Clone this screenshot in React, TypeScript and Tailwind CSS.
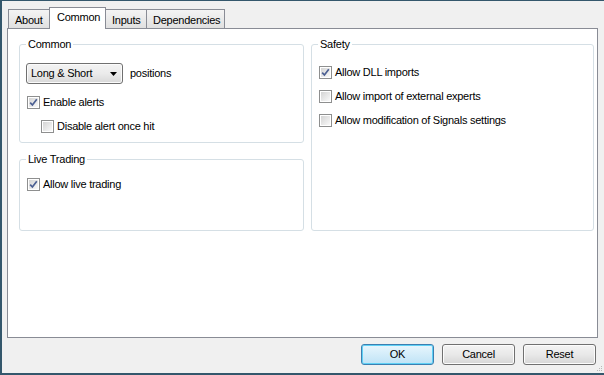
import React from "react";

function CheckBox({ checked }: { checked?: boolean }) {
  return (
    <span className="w-[13px] h-[13px] border border-[#8e8f8f] bg-white p-px flex shrink-0">
      <span className="flex-1 bg-linear-to-br from-[#d4d4d4] to-[#f9f9f9] flex items-center justify-center">
        {checked && (
          <svg width="9" height="9" viewBox="0 0 9 9">
            <path d="M1.2 4.6 L3.4 7 L7.8 1.2" stroke="#4b5f92" strokeWidth="1.7" fill="none" />
          </svg>
        )}
      </span>
    </span>
  );
}

function Row({ label, checked, indent = "" }: { label: string; checked?: boolean; indent?: string }) {
  return (
    <div className={`flex items-center h-[17px] gap-[3px] ${indent}`}>
      <CheckBox checked={checked} />
      <span className="leading-[13px]">{label}</span>
    </div>
  );
}

function Tab({ label, w, active }: { label: string; w: string; active?: boolean }) {
  if (active) {
    return (
      <div className={`${w} h-[22px] -ml-px -mb-px relative z-10 bg-white border border-b-0 border-[#898c95] pl-[7px] pt-[3px] leading-[13px]`}>
        {label}
      </div>
    );
  }
  return (
    <div className={`${w} h-[19px] -ml-px first:ml-0 bg-linear-to-b from-[#f4f4f4] to-[#e0e0e0] border border-b-0 border-[#898c95] pl-[6px] pt-[4px] leading-[13px]`}>
      {label}
    </div>
  );
}

function Group({ title, className, children }: { title: string; className: string; children: React.ReactNode }) {
  return (
    <fieldset className={`border border-[#d5dfe5] rounded-[3px] ${className}`}>
      <legend className="ml-[6px] px-[2px] leading-[13px]">{title}</legend>
      {children}
    </fieldset>
  );
}

function Button({ label, primary }: { label: string; primary?: boolean }) {
  return (
    <button
      type="button"
      className={
        primary
          ? "w-[73px] h-[21px] rounded-[3px] border border-[#3c7fb1] bg-linear-to-b from-[#e8f6fd] to-[#bfe3f6] shadow-[inset_0_0_0_1px_#5fd0f5]"
          : "w-[73px] h-[21px] rounded-[3px] border border-[#707070] bg-linear-to-b from-[#f3f3f3] via-[#e9e9e9] to-[#d6d6d6] shadow-[inset_0_0_0_1px_#fcfcfc]"
      }
    >
      {label}
    </button>
  );
}

export default function App() {
  return (
    <div className="relative w-[604px] h-[375px] bg-[#f0f0f0] border-l-2 border-t border-b-2 border-[#34576c] flex flex-col text-[11px] tracking-[-0.25px] text-black font-['Liberation_Sans',Arial,sans-serif]">
      <div className="h-[27px] flex items-end pl-[6px]">
        <Tab label="About" w="w-[42px]" />
        <Tab label="Common" w="w-[57px]" active />
        <Tab label="Inputs" w="w-[42px]" />
        <Tab label="Dependencies" w="w-[79px]" />
      </div>

      <div className="h-[310px] ml-[5px] mr-[6px] bg-white border border-[#898c95] pt-[9px] pl-[11px] flex gap-[7px]">
        <div className="w-[285px] flex flex-col">
          <Group title="Common" className="h-[105px]">
            <div className="pl-[6px] pt-[12px]">
              <div className="flex items-center gap-[7px]">
                <div className="w-[97px] h-[21px] rounded-[3px] border border-[#707070] bg-linear-to-b from-[#f3f3f3] via-[#ebebeb] to-[#d8d8d8] shadow-[inset_0_0_0_1px_#fbfbfb] flex items-center pl-[4px] pr-[5px]">
                  <span className="flex-1">Long &amp; Short</span>
                  <svg width="7" height="4" viewBox="0 0 7 4">
                    <path d="M0 0 H7 L3.5 4 Z" fill="#000" />
                  </svg>
                </div>
                <span>positions</span>
              </div>
              <div className="mt-[10px] flex flex-col gap-[7px]">
                <Row label="Enable alerts" checked indent="ml-px" />
                <Row label="Disable alert once hit" indent="ml-[15px]" />
              </div>
            </div>
          </Group>
          <Group title="Live Trading" className="mt-[10px] h-[78px]">
            <div className="pl-[7px] pt-[10px]">
              <Row label="Allow live trading" checked />
            </div>
          </Group>
        </div>
        <div className="w-[283px]">
          <Group title="Safety" className="h-[193px]">
            <div className="pl-[7px] pt-[13px] flex flex-col gap-[7px]">
              <Row label="Allow DLL imports" checked />
              <Row label="Allow import of external experts" />
              <Row label="Allow modification of Signals settings" />
            </div>
          </Group>
        </div>
      </div>

      <div className="flex-1 flex justify-end items-start pt-[6px] pr-[8px] gap-[8px]">
        <Button label="OK" primary />
        <Button label="Cancel" />
        <Button label="Reset" />
      </div>

      <svg className="absolute right-[1px] bottom-[1px]" width="7" height="7" viewBox="0 0 7 7">
        <rect x="5" y="1" width="1" height="1" fill="#b9b9b9" />
        <rect x="3" y="3" width="1" height="1" fill="#b9b9b9" />
        <rect x="5" y="3" width="1" height="1" fill="#b9b9b9" />
        <rect x="1" y="5" width="1" height="1" fill="#b9b9b9" />
        <rect x="3" y="5" width="1" height="1" fill="#b9b9b9" />
        <rect x="5" y="5" width="1" height="1" fill="#b9b9b9" />
      </svg>
    </div>
  );
}
